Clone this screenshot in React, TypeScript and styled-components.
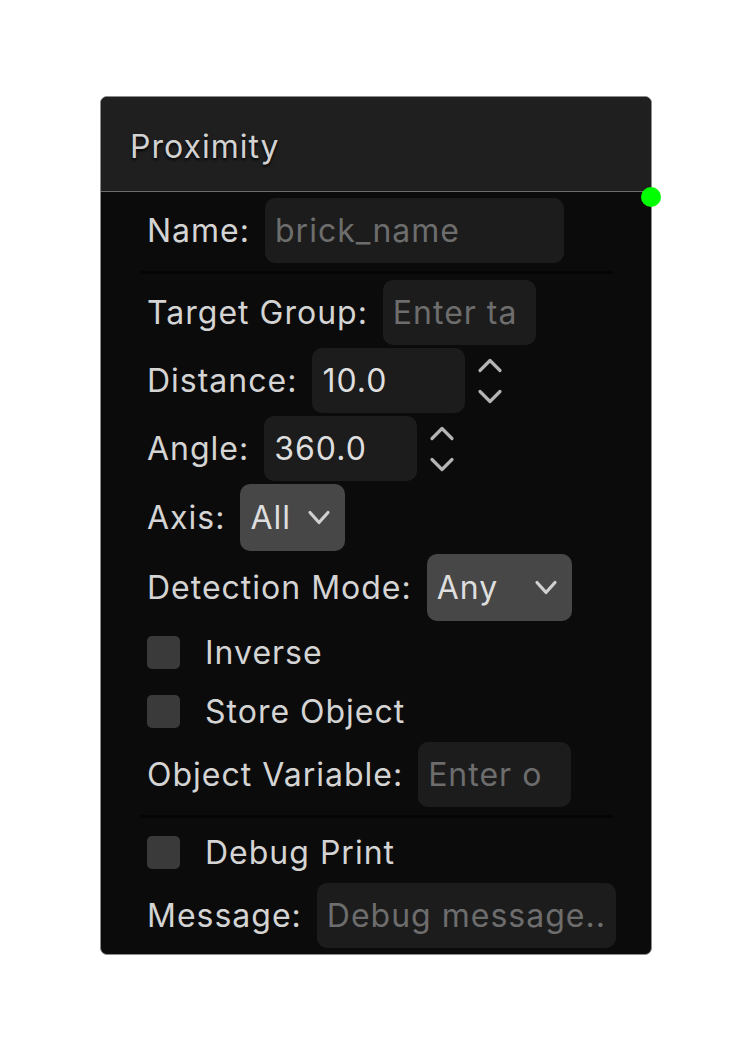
import styled, { createGlobalStyle } from 'styled-components'

const GlobalStyle = createGlobalStyle`
  html, body {
    margin: 0;
    padding: 0;
    background: #ffffff;
  }
  body {
    font-family: Inter, "Noto Sans", sans-serif;
  }
`

const Page = styled.div`
  width: 752px;
  height: 1056px;
  padding: 96px 0 0 100px;
  box-sizing: border-box;
`

const Node = styled.div`
  position: relative;
  width: 552px;
  height: 859px;
  box-sizing: border-box;
  border: 1px solid #8c8c8c;
  border-radius: 7px;
  background: #0b0b0b;
  color: #d6d6d6;
  font-size: 32px;
  letter-spacing: 1px;
`

const Header = styled.div`
  height: 95px;
  box-sizing: border-box;
  display: flex;
  align-items: center;
  padding: 4px 0 0 29px;
  background: #1f1f1f;
  border-bottom: 1px solid #6c6c6c;
  border-radius: 6px 6px 0 0;
`

const Title = styled.div`
  color: #d2d2d2;
  text-shadow: 0 2px 3px rgba(0, 0, 0, 0.9);
`

const Handle = styled.div`
  position: absolute;
  right: -10px;
  top: 90px;
  width: 20px;
  height: 20px;
  border-radius: 50%;
  background: #00ff00;
`

const Body = styled.div`
  display: flex;
  flex-direction: column;
  gap: 3px;
  padding: 6px 38px 0 39px;
`

const Row = styled.div<{ $h?: number }>`
  display: flex;
  align-items: center;
  gap: 15px;
  height: ${p => p.$h ?? 65}px;
  padding-left: 7px;
  white-space: nowrap;
`

const Label = styled.span`
  color: #d4d4d4;
`

const Input = styled.div<{ $w: number; $placeholder?: boolean }>`
  width: ${p => p.$w}px;
  height: 65px;
  box-sizing: border-box;
  padding: 0 10px;
  display: flex;
  align-items: center;
  overflow: hidden;
  white-space: nowrap;
  border-radius: 10px;
  background: #1c1c1c;
  color: ${p => (p.$placeholder ? '#6d6d6d' : '#dedede')};
  flex-shrink: 0;
`

const Select = styled.div<{ $w: number }>`
  width: ${p => p.$w}px;
  height: 67px;
  box-sizing: border-box;
  padding: 0 14px 0 10px;
  display: flex;
  align-items: center;
  justify-content: space-between;
  border-radius: 10px;
  background: #474747;
  color: #dedede;
  flex-shrink: 0;
`

const Spinner = styled.div`
  display: flex;
  flex-direction: column;
  gap: 16px;
  margin-left: -3px;
`

const Separator = styled.div`
  height: 3px;
  background: #050505;
  margin: 5px 0 3px;
`

const CheckRow = styled.div`
  display: flex;
  align-items: center;
  gap: 25px;
  height: 56px;
  padding-left: 7px;
`

const Checkbox = styled.div`
  width: 33px;
  height: 33px;
  border-radius: 5px;
  background: #3a3a3a;
  flex-shrink: 0;
`

const Chevron = ({ up, w = 26, color = '#b4b4b4' }: { up?: boolean; w?: number; color?: string }) => (
  <svg width={w} height="15" viewBox={`0 0 ${w} 15`}>
    <path
      d={up ? `M3 12.5 L${w / 2} 2.5 L${w - 3} 12.5` : `M3 2.5 L${w / 2} 12.5 L${w - 3} 2.5`}
      fill="none"
      stroke={color}
      strokeWidth="3.2"
      strokeLinecap="round"
      strokeLinejoin="round"
    />
  </svg>
)

const Arrows = () => (
  <Spinner>
    <Chevron up />
    <Chevron />
  </Spinner>
)

export default function App() {
  return (
    <>
      <GlobalStyle />
      <Page>
        <Node>
          <Header>
            <Title>Proximity</Title>
          </Header>
          <Handle />
          <Body>
            <Row>
              <Label>Name:</Label>
              <Input $w={299} $placeholder>brick_name</Input>
            </Row>
            <Separator />
            <Row>
              <Label>Target Group:</Label>
              <Input $w={153} $placeholder>Enter ta</Input>
            </Row>
            <Row>
              <Label>Distance:</Label>
              <Input $w={153}>10.0</Input>
              <Arrows />
            </Row>
            <Row>
              <Label>Angle:</Label>
              <Input $w={153}>360.0</Input>
              <Arrows />
            </Row>
            <Row $h={67}>
              <Label>Axis:</Label>
              <Select $w={105}>
                All
                <Chevron w={24} color="#d0d0d0" />
              </Select>
            </Row>
            <Row $h={67}>
              <Label>Detection Mode:</Label>
              <Select $w={145}>
                Any
                <Chevron w={24} color="#d0d0d0" />
              </Select>
            </Row>
            <CheckRow>
              <Checkbox />
              <Label>Inverse</Label>
            </CheckRow>
            <CheckRow>
              <Checkbox />
              <Label>Store Object</Label>
            </CheckRow>
            <Row>
              <Label>Object Variable:</Label>
              <Input $w={153} $placeholder>Enter o</Input>
            </Row>
            <Separator />
            <CheckRow>
              <Checkbox />
              <Label>Debug Print</Label>
            </CheckRow>
            <Row>
              <Label>Message:</Label>
              <Input $w={299} $placeholder>Debug message..</Input>
            </Row>
          </Body>
        </Node>
      </Page>
    </>
  )
}
